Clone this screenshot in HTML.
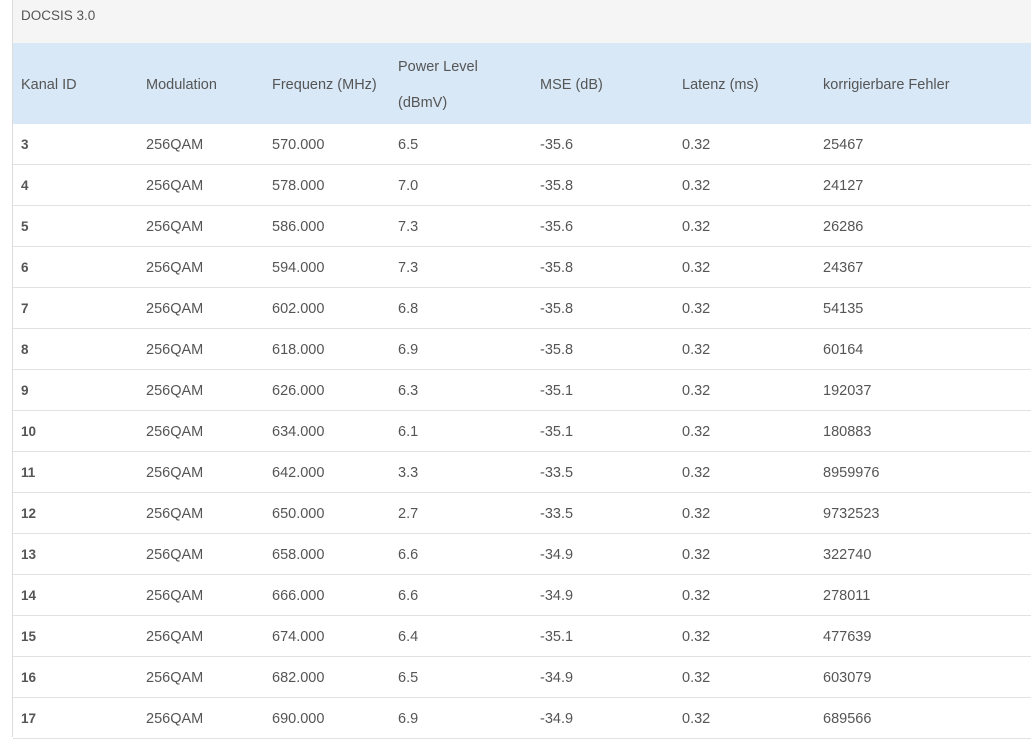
<!DOCTYPE html>
<html><head><meta charset="utf-8"><style>
*{margin:0;padding:0;box-sizing:border-box}
body{width:1031px;height:737px;overflow:hidden;background:#fff;font-family:"Liberation Sans",sans-serif;font-size:14.5px;color:#555;position:relative}
.wrap{position:absolute;left:12px;top:0;width:1019px;height:737px;border-left:1px solid #dcdcdc}
.title{position:absolute;left:0;top:0;width:1019px;height:43px;background:#f5f5f5;padding:8px 0 0 8px;font-size:13.5px}
.head{position:absolute;left:0;top:43px;width:1019px;height:81px;background:#d8e8f7}
.c{position:absolute;white-space:nowrap}
.row{position:absolute;left:0;width:1019px;height:41px;border-bottom:1px solid #e2e2e2}
.row .c{top:13px}
b{font-weight:bold;color:#555;font-size:13.5px}
</style></head><body><div class="wrap">
<div class="title">DOCSIS 3.0</div>
<div class="head">
<div class="c" style="left:8px;top:34px">Kanal ID</div>
<div class="c" style="left:133px;top:34px">Modulation</div>
<div class="c" style="left:259px;top:34px">Frequenz (MHz)</div>
<div class="c" style="left:385px;top:16px">Power Level</div>
<div class="c" style="left:385px;top:52px">(dBmV)</div>
<div class="c" style="left:527px;top:34px">MSE (dB)</div>
<div class="c" style="left:669px;top:34px">Latenz (ms)</div>
<div class="c" style="left:810px;top:34px">korrigierbare Fehler</div>
</div>
</div>
<div style="position:absolute;left:13px;top:124px">
<div class="row" style="top:0px"><div class="c" style="left:8px"><b>3</b></div><div class="c" style="left:133px">256QAM</div><div class="c" style="left:259px">570.000</div><div class="c" style="left:385px">6.5</div><div class="c" style="left:527px">-35.6</div><div class="c" style="left:669px">0.32</div><div class="c" style="left:810px">25467</div></div>
<div class="row" style="top:41px"><div class="c" style="left:8px"><b>4</b></div><div class="c" style="left:133px">256QAM</div><div class="c" style="left:259px">578.000</div><div class="c" style="left:385px">7.0</div><div class="c" style="left:527px">-35.8</div><div class="c" style="left:669px">0.32</div><div class="c" style="left:810px">24127</div></div>
<div class="row" style="top:82px"><div class="c" style="left:8px"><b>5</b></div><div class="c" style="left:133px">256QAM</div><div class="c" style="left:259px">586.000</div><div class="c" style="left:385px">7.3</div><div class="c" style="left:527px">-35.6</div><div class="c" style="left:669px">0.32</div><div class="c" style="left:810px">26286</div></div>
<div class="row" style="top:123px"><div class="c" style="left:8px"><b>6</b></div><div class="c" style="left:133px">256QAM</div><div class="c" style="left:259px">594.000</div><div class="c" style="left:385px">7.3</div><div class="c" style="left:527px">-35.8</div><div class="c" style="left:669px">0.32</div><div class="c" style="left:810px">24367</div></div>
<div class="row" style="top:164px"><div class="c" style="left:8px"><b>7</b></div><div class="c" style="left:133px">256QAM</div><div class="c" style="left:259px">602.000</div><div class="c" style="left:385px">6.8</div><div class="c" style="left:527px">-35.8</div><div class="c" style="left:669px">0.32</div><div class="c" style="left:810px">54135</div></div>
<div class="row" style="top:205px"><div class="c" style="left:8px"><b>8</b></div><div class="c" style="left:133px">256QAM</div><div class="c" style="left:259px">618.000</div><div class="c" style="left:385px">6.9</div><div class="c" style="left:527px">-35.8</div><div class="c" style="left:669px">0.32</div><div class="c" style="left:810px">60164</div></div>
<div class="row" style="top:246px"><div class="c" style="left:8px"><b>9</b></div><div class="c" style="left:133px">256QAM</div><div class="c" style="left:259px">626.000</div><div class="c" style="left:385px">6.3</div><div class="c" style="left:527px">-35.1</div><div class="c" style="left:669px">0.32</div><div class="c" style="left:810px">192037</div></div>
<div class="row" style="top:287px"><div class="c" style="left:8px"><b>10</b></div><div class="c" style="left:133px">256QAM</div><div class="c" style="left:259px">634.000</div><div class="c" style="left:385px">6.1</div><div class="c" style="left:527px">-35.1</div><div class="c" style="left:669px">0.32</div><div class="c" style="left:810px">180883</div></div>
<div class="row" style="top:328px"><div class="c" style="left:8px"><b>11</b></div><div class="c" style="left:133px">256QAM</div><div class="c" style="left:259px">642.000</div><div class="c" style="left:385px">3.3</div><div class="c" style="left:527px">-33.5</div><div class="c" style="left:669px">0.32</div><div class="c" style="left:810px">8959976</div></div>
<div class="row" style="top:369px"><div class="c" style="left:8px"><b>12</b></div><div class="c" style="left:133px">256QAM</div><div class="c" style="left:259px">650.000</div><div class="c" style="left:385px">2.7</div><div class="c" style="left:527px">-33.5</div><div class="c" style="left:669px">0.32</div><div class="c" style="left:810px">9732523</div></div>
<div class="row" style="top:410px"><div class="c" style="left:8px"><b>13</b></div><div class="c" style="left:133px">256QAM</div><div class="c" style="left:259px">658.000</div><div class="c" style="left:385px">6.6</div><div class="c" style="left:527px">-34.9</div><div class="c" style="left:669px">0.32</div><div class="c" style="left:810px">322740</div></div>
<div class="row" style="top:451px"><div class="c" style="left:8px"><b>14</b></div><div class="c" style="left:133px">256QAM</div><div class="c" style="left:259px">666.000</div><div class="c" style="left:385px">6.6</div><div class="c" style="left:527px">-34.9</div><div class="c" style="left:669px">0.32</div><div class="c" style="left:810px">278011</div></div>
<div class="row" style="top:492px"><div class="c" style="left:8px"><b>15</b></div><div class="c" style="left:133px">256QAM</div><div class="c" style="left:259px">674.000</div><div class="c" style="left:385px">6.4</div><div class="c" style="left:527px">-35.1</div><div class="c" style="left:669px">0.32</div><div class="c" style="left:810px">477639</div></div>
<div class="row" style="top:533px"><div class="c" style="left:8px"><b>16</b></div><div class="c" style="left:133px">256QAM</div><div class="c" style="left:259px">682.000</div><div class="c" style="left:385px">6.5</div><div class="c" style="left:527px">-34.9</div><div class="c" style="left:669px">0.32</div><div class="c" style="left:810px">603079</div></div>
<div class="row" style="top:574px"><div class="c" style="left:8px"><b>17</b></div><div class="c" style="left:133px">256QAM</div><div class="c" style="left:259px">690.000</div><div class="c" style="left:385px">6.9</div><div class="c" style="left:527px">-34.9</div><div class="c" style="left:669px">0.32</div><div class="c" style="left:810px">689566</div></div>
</div>
</body></html>
